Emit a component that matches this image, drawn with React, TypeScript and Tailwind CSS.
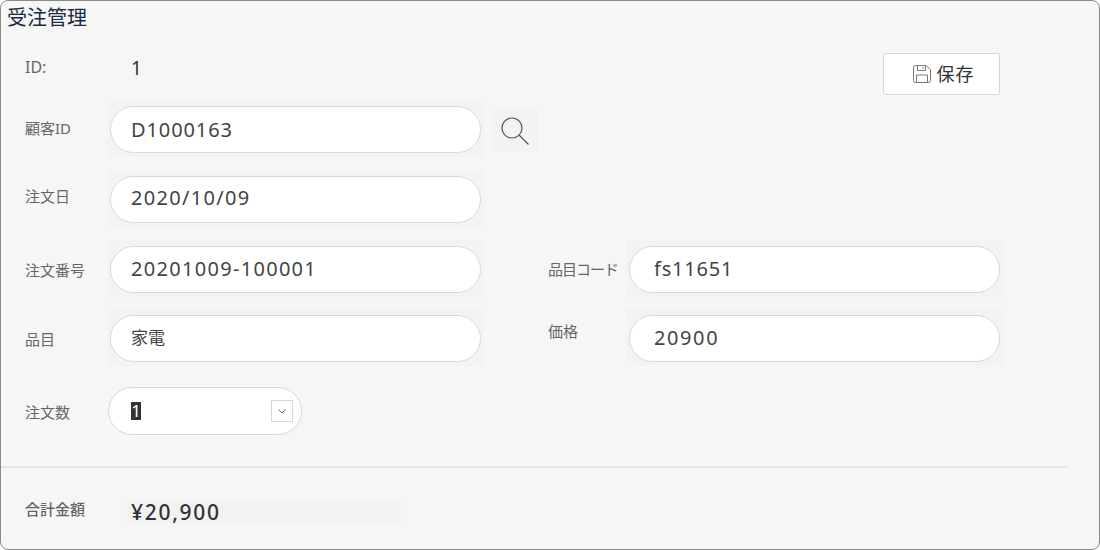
const jp = 'font-["Noto_Sans","Noto_Sans_CJK_JP",sans-serif]';

function Field({ label, labelClass = '', labelWidth, value, valueClass }: { label: string; labelClass?: string; labelWidth: string; value: string; valueClass: string }) {
  return (
    <div className="flex items-center">
      <div className={`${labelWidth} ${labelClass} text-[15px] text-[#666]`}>{label}</div>
      <div className="w-[377px] h-[57px] bg-[#f3f3f3] px-[3px] py-[6px]">
        <div className={`${valueClass} w-[371px] h-[47px] flex items-center rounded-full bg-white border border-[#d8d8d8] text-[#444]`}>
          {value}
        </div>
      </div>
    </div>
  );
}

export default function App() {
  return (
    <div className={`${jp} w-[1100px] h-[550px] overflow-hidden rounded-[8px] border border-[#8a8a8a] bg-[#f6f6f6]`}>
      <div className="h-[52px] pl-[6px] pt-[3px] text-[20px] leading-[28px] text-[#1c2b45]">受注管理</div>

      <div className="pl-[24px] w-[999px] flex justify-between h-[47px]">
        <div className="flex text-[#444]">
          <div className="w-[106px] text-[16px] leading-[28px] text-[#666]">ID:</div>
          <div className="text-[19px] leading-[30px] text-[#333]">1</div>
        </div>
        <button className="w-[117px] h-[42px] pl-[4px] flex items-center justify-center gap-[6px] bg-white border border-[#d8d8d8] rounded-[2px] text-[18px] tracking-[1px] text-[#333]">
          <svg width="18" height="18" viewBox="0 0 18 18" fill="none" stroke="#777" strokeWidth="1">
            <path d="M2.5.5h10.5l4.5 4v11a2 2 0 0 1-2 2h-13a2 2 0 0 1-2-2v-13a2 2 0 0 1 2-2z" />
            <path d="M4.5.5v5h8v-5M10 2v2" />
            <path d="M3.5 17.5v-7.500h11v7.500" />
          </svg>
          保存
        </button>
      </div>

      <div className="pl-[24px]">
        <div className="flex items-center">
          <Field label="顧客ID" labelWidth="w-[82px]" value="D1000163" valueClass="text-[20px] tracking-[0.900px] pl-[20px]" />
          <div className="ml-[8px] mt-[5px] w-[46px] h-[42px] flex items-center justify-center bg-[#f3f3f3]">
            <svg width="28" height="28" viewBox="0 0 28 28" fill="none" stroke="#555" strokeWidth="1.200">
              <circle cx="11" cy="11" r="10" />
              <path d="M18 18l9.500 9.500" />
            </svg>
          </div>
        </div>

        <div className="mt-[13px]">
          <Field label="注文日" labelClass="pb-[5px]" labelWidth="w-[82px]" value="2020/10/09" valueClass="text-[20px] tracking-[1.300px] pl-[20px] pb-[4px]" />
        </div>

        <div className="mt-[13px] flex">
          <Field label="注文番号" labelClass="pt-[3px]" labelWidth="w-[82px]" value="20201009-100001" valueClass="text-[20px] tracking-[1.300px] pl-[20px] pb-[2px]" />
          <div className="ml-[64px]">
            <Field label="品目コード" labelClass="pt-[1px] whitespace-nowrap tracking-[-1px]" labelWidth="w-[78px]" value="fs11651" valueClass="text-[20px] tracking-[0.800px] pl-[24px] pb-[2px]" />
          </div>
        </div>

        <div className="mt-[12px] flex">
          <Field label="品目" labelClass="pt-[3px]" labelWidth="w-[82px]" value="家電" valueClass="text-[17px] pl-[20px] pb-[2px]" />
          <div className="ml-[64px]">
            <Field label="価格" labelClass="pb-[12px]" labelWidth="w-[78px]" value="20900" valueClass="text-[20px] tracking-[1.600px] pl-[24px] pb-[2px]" />
          </div>
        </div>

        <div className="mt-[21px] flex items-center">
          <div className="w-[83px] pt-[3px] text-[15px] text-[#666]">注文数</div>
          <div className="w-[194px] h-[48px] flex items-center justify-between rounded-full bg-white border border-[#d8d8d8] pl-[22px] pr-[8px]">
            <span className="w-[10px] h-[18px] flex items-center justify-center bg-[#333] text-white text-[17px] leading-[18px]">1</span>
            <span className="w-[22px] h-[22px] flex items-center justify-center bg-white border border-[#d8d8d8]">
              <svg width="8" height="5" viewBox="0 0 8 5" fill="none" stroke="#666" strokeWidth="1">
                <path d="M.5.5L4 4 7.500.5" />
              </svg>
            </span>
          </div>
        </div>
      </div>

      <div className="mt-[31px] w-[1067px] h-[2px] bg-[#e6e6e6]" />

      <div className="mt-[30px] pl-[24px] flex items-center">
        <div className="w-[102px] pb-[5px] text-[15px] font-medium text-[#666]">合計金額</div>
        <div className="w-[274px] h-[23px] bg-[#f2f2f2] pl-[4px] text-[21px] leading-[24px] font-medium tracking-[1.700px] text-[#333]">¥20,900</div>
      </div>
    </div>
  );
}
